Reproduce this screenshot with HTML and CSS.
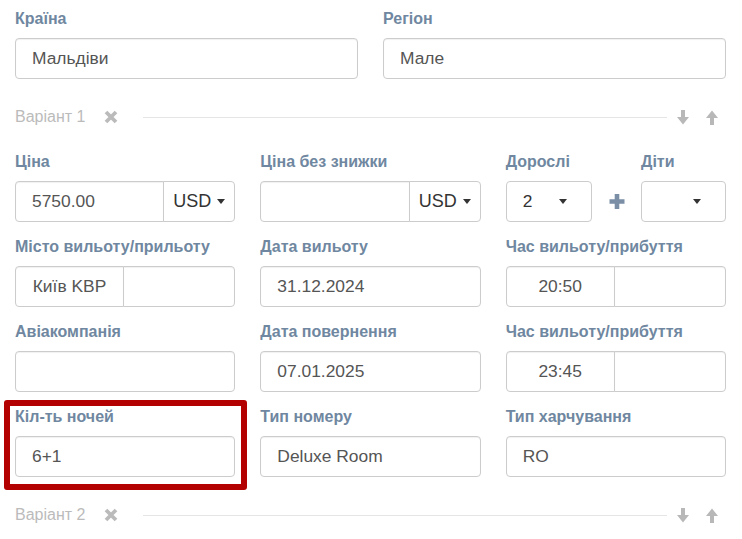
FILE: index.html
```html
<!DOCTYPE html>
<html lang="uk">
<head>
<meta charset="utf-8">
<link rel="stylesheet" href="styles.css">
</head>
<body>
<div class="form">
  <div class="row two">
    <div class="group">
      <div class="label">Країна</div>
      <div class="input">Мальдіви</div>
    </div>
    <div class="group">
      <div class="label">Регіон</div>
      <div class="input">Мале</div>
    </div>
  </div>

  <div class="variant">
    <span class="vtitle">Варіант 1</span>
    <svg class="vx" width="14" height="14" viewBox="0 0 14 14"><path d="M2 2 L12 12 M12 2 L2 12" stroke="#bbbbbb" stroke-width="3.8" stroke-linecap="butt"/></svg>
    <span class="vline"></span>
    <svg class="arrow" width="12" height="15" viewBox="0 0 12 15"><path d="M4 0 H8 V7 H12 L6 14.5 L0 7 H4 Z" fill="#b8b8b8"/></svg>
    <svg class="arrow" width="12" height="15" viewBox="0 0 12 15"><path d="M4 15 H8 V8 H12 L6 0.5 L0 8 H4 Z" fill="#b8b8b8"/></svg>
  </div>

  <div class="row three">
    <div class="group">
      <div class="label">Ціна</div>
      <div class="igroup">
        <div class="input grow">5750.00</div>
        <div class="btn">USD <span class="caret"></span></div>
      </div>
    </div>
    <div class="group">
      <div class="label">Ціна без знижки</div>
      <div class="igroup">
        <div class="input grow"></div>
        <div class="btn">USD <span class="caret"></span></div>
      </div>
    </div>
    <div class="group pax">
      <div class="label">Дорослі</div>
      <div></div>
      <div class="label">Діти</div>
      <div class="select"><span>2</span><span class="caret"></span></div>
      <div class="plus"><svg width="16" height="15" viewBox="0 0 16 15"><path d="M8 0 V15 M0.5 7.5 H15.5" stroke="#7a8fa6" stroke-width="4.6"/></svg></div>
      <div class="select"><span></span><span class="caret"></span></div>
    </div>

    <div class="group">
      <div class="label">Місто вильоту/прильоту</div>
      <div class="split">
        <div class="part">Київ KBP</div>
        <div class="part"></div>
      </div>
    </div>
    <div class="group">
      <div class="label">Дата вильоту</div>
      <div class="input">31.12.2024</div>
    </div>
    <div class="group">
      <div class="label">Час вильоту/прибуття</div>
      <div class="split">
        <div class="part">20:50</div>
        <div class="part"></div>
      </div>
    </div>

    <div class="group">
      <div class="label">Авіакомпанія</div>
      <div class="input"></div>
    </div>
    <div class="group">
      <div class="label">Дата повернення</div>
      <div class="input">07.01.2025</div>
    </div>
    <div class="group">
      <div class="label">Час вильоту/прибуття</div>
      <div class="split">
        <div class="part">23:45</div>
        <div class="part"></div>
      </div>
    </div>

    <div class="group marked">
      <div class="label">Кіл-ть ночей</div>
      <div class="input">6+1</div>
      <div class="highlight"></div>
    </div>
    <div class="group">
      <div class="label">Тип номеру</div>
      <div class="input">Deluxe Room</div>
    </div>
    <div class="group">
      <div class="label">Тип харчування</div>
      <div class="input">RO</div>
    </div>
  </div>

  <div class="variant">
    <span class="vtitle">Варіант 2</span>
    <svg class="vx" width="14" height="14" viewBox="0 0 14 14"><path d="M2 2 L12 12 M12 2 L2 12" stroke="#bbbbbb" stroke-width="3.8" stroke-linecap="butt"/></svg>
    <span class="vline"></span>
    <svg class="arrow" width="12" height="15" viewBox="0 0 12 15"><path d="M4 0 H8 V7 H12 L6 14.5 L0 7 H4 Z" fill="#b8b8b8"/></svg>
    <svg class="arrow" width="12" height="15" viewBox="0 0 12 15"><path d="M4 15 H8 V8 H12 L6 0.5 L0 8 H4 Z" fill="#b8b8b8"/></svg>
  </div>
</div>
</body>
</html>
```

FILE: styles.css
```css
* { box-sizing: border-box; }
html, body { margin: 0; padding: 0; background: #fff; }
body {
  font-family: "Liberation Sans", Arial, sans-serif;
  color: #555;
  overflow: hidden;
}
.form {
  padding: 9px 16px 0 15px;
  width: 742px;
}
.row { display: grid; column-gap: 25px; }
.row.two { grid-template-columns: 1fr 1fr; }
.row.three { grid-template-columns: 1fr 1fr 1fr; }

.group { margin-bottom: 15px; position: relative; }
.label {
  font-size: 16px;
  font-weight: bold;
  line-height: 20px;
  height: 20px;
  color: #6f87a0;
  margin-bottom: 9px;
  white-space: nowrap;
}
.input, .part, .btn, .select {
  height: 41px;
  border: 1px solid #ccc;
  border-radius: 4px;
  font-size: 17.4px;
  line-height: 39px;
  padding: 0 16px;
  color: #555;
  background: #fff;
  box-shadow: inset 0 1px 1px rgba(0,0,0,.06);
  white-space: nowrap;
}
.igroup { display: flex; }
.igroup .grow { flex: 1; border-radius: 4px 0 0 4px; }
.btn {
  width: 72px;
  margin-left: -1px;
  border-radius: 0 4px 4px 0;
  padding: 0;
  display: flex;
  align-items: center;
  justify-content: center;
  gap: 6px;
  font-size: 18px;
  color: #333;
  box-shadow: none;
}
.caret {
  display: inline-block;
  width: 0;
  height: 0;
  border-top: 5px solid #333;
  border-left: 4.5px solid transparent;
  border-right: 4.5px solid transparent;
}
.pax {
  display: grid;
  grid-template-columns: 86px 1fr 85px;
}
.select {
  display: flex;
  align-items: center;
  justify-content: space-between;
  padding: 0 24px 0 16px;
  color: #333;
  box-shadow: none;
}
.plus { display: flex; align-items: center; justify-content: center; }
.plus svg { display: block; margin-left: 2px; }
.split { display: grid; grid-template-columns: 109px 1fr; }
.split .part { padding: 0; text-align: center; }
.split .part:first-child { border-radius: 4px 0 0 4px; }
.split .part:last-child { border-radius: 0 4px 4px 0; margin-left: -1px; }

.variant {
  display: flex;
  align-items: center;
  height: 20px;
  margin-top: 13px;
  margin-bottom: 25px;
  padding-right: 8px;
}
.vtitle { font-size: 16px; color: #bbb; line-height: 20px; }
.vx { margin-left: 19px; display: block; }
.vline {
  flex: 1;
  height: 1px;
  background: #e5e5e5;
  margin: 1px 10px 0 25px;
}
.arrow { display: block; }
.arrow + .arrow { margin-left: 17px; }

.highlight {
  position: absolute;
  top: -7px;
  left: -11px;
  right: -12px;
  bottom: -13px;
  border: 6px solid #b30000;
  border-radius: 3px;
  pointer-events: none;
}
```
